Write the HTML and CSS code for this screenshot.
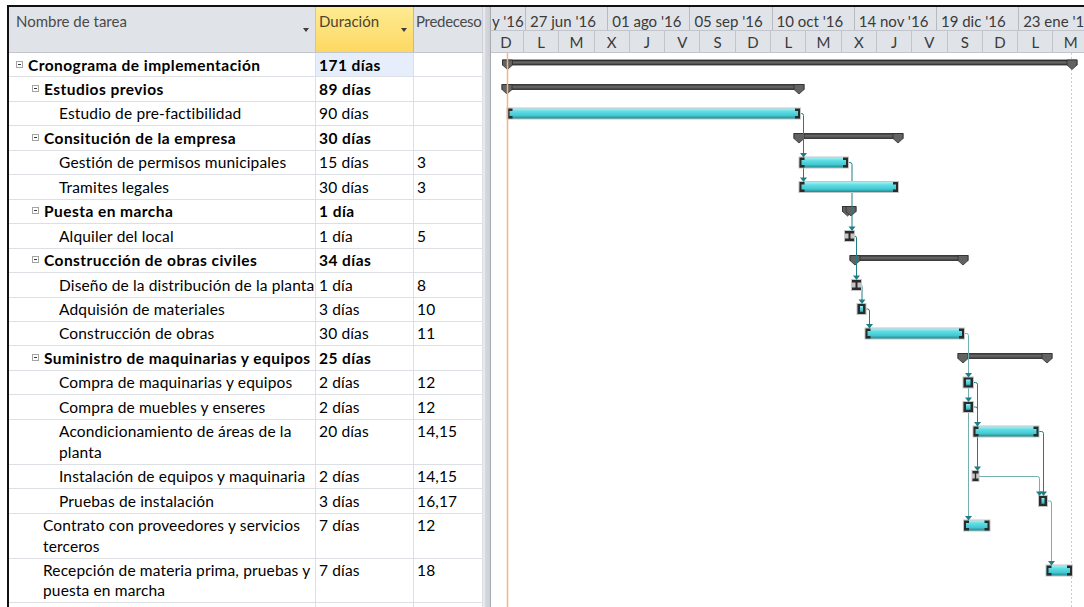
FILE: index.html
```html
<!DOCTYPE html>
<html lang="es">
<head>
<meta charset="utf-8">
<title>Cronograma de implementación</title>
<link rel="stylesheet" href="styles.css">
</head>
<body>
<div class="project">
  <section class="sheet">
    <header class="sheet-head">
      <div class="hcell c-name"><span class="hlabel">Nombre de tarea</span><span class="drop"></span></div>
      <div class="hcell c-dur sorted"><span class="hlabel">Duración</span><span class="drop"></span></div>
      <div class="hcell c-pred"><span class="hlabel">Predeceso</span></div>
    </header>
    <div class="sheet-body">
      <div class="row summary">
        <div class="cell c-name lvl0"><span class="toggle"></span>Cronograma de implementación</div>
        <div class="cell c-dur active">171 días</div>
        <div class="cell c-pred"></div>
      </div>
      <div class="row summary">
        <div class="cell c-name lvl1"><span class="toggle"></span>Estudios previos</div>
        <div class="cell c-dur">89 días</div>
        <div class="cell c-pred"></div>
      </div>
      <div class="row">
        <div class="cell c-name lvl2">Estudio de pre-factibilidad</div>
        <div class="cell c-dur">90 días</div>
        <div class="cell c-pred"></div>
      </div>
      <div class="row summary">
        <div class="cell c-name lvl1"><span class="toggle"></span>Consitución de la empresa</div>
        <div class="cell c-dur">30 días</div>
        <div class="cell c-pred"></div>
      </div>
      <div class="row">
        <div class="cell c-name lvl2">Gestión de permisos municipales</div>
        <div class="cell c-dur">15 días</div>
        <div class="cell c-pred">3</div>
      </div>
      <div class="row">
        <div class="cell c-name lvl2">Tramites legales</div>
        <div class="cell c-dur">30 días</div>
        <div class="cell c-pred">3</div>
      </div>
      <div class="row summary">
        <div class="cell c-name lvl1"><span class="toggle"></span>Puesta en marcha</div>
        <div class="cell c-dur">1 día</div>
        <div class="cell c-pred"></div>
      </div>
      <div class="row">
        <div class="cell c-name lvl2">Alquiler del local</div>
        <div class="cell c-dur">1 día</div>
        <div class="cell c-pred">5</div>
      </div>
      <div class="row summary">
        <div class="cell c-name lvl1"><span class="toggle"></span>Construcción de obras civiles</div>
        <div class="cell c-dur">34 días</div>
        <div class="cell c-pred"></div>
      </div>
      <div class="row">
        <div class="cell c-name lvl2">Diseño de la distribución de la planta</div>
        <div class="cell c-dur">1 día</div>
        <div class="cell c-pred">8</div>
      </div>
      <div class="row">
        <div class="cell c-name lvl2">Adquisión de materiales</div>
        <div class="cell c-dur">3 días</div>
        <div class="cell c-pred">10</div>
      </div>
      <div class="row">
        <div class="cell c-name lvl2">Construcción de obras</div>
        <div class="cell c-dur">30 días</div>
        <div class="cell c-pred">11</div>
      </div>
      <div class="row summary">
        <div class="cell c-name lvl1"><span class="toggle"></span>Suministro de maquinarias y equipos</div>
        <div class="cell c-dur">25 días</div>
        <div class="cell c-pred"></div>
      </div>
      <div class="row">
        <div class="cell c-name lvl2">Compra de maquinarias y equipos</div>
        <div class="cell c-dur">2 días</div>
        <div class="cell c-pred">12</div>
      </div>
      <div class="row">
        <div class="cell c-name lvl2">Compra de muebles y enseres</div>
        <div class="cell c-dur">2 días</div>
        <div class="cell c-pred">12</div>
      </div>
      <div class="row">
        <div class="cell c-name lvl2">Acondicionamiento de áreas de la<br>planta</div>
        <div class="cell c-dur">20 días</div>
        <div class="cell c-pred">14,15</div>
      </div>
      <div class="row">
        <div class="cell c-name lvl2">Instalación de equipos y maquinaria</div>
        <div class="cell c-dur">2 días</div>
        <div class="cell c-pred">14,15</div>
      </div>
      <div class="row">
        <div class="cell c-name lvl2">Pruebas de instalación</div>
        <div class="cell c-dur">3 días</div>
        <div class="cell c-pred">16,17</div>
      </div>
      <div class="row">
        <div class="cell c-name lvl1t">Contrato con proveedores y servicios<br>terceros</div>
        <div class="cell c-dur">7 días</div>
        <div class="cell c-pred">12</div>
      </div>
      <div class="row">
        <div class="cell c-name lvl1t">Recepción de materia prima, pruebas y<br>puesta en marcha</div>
        <div class="cell c-dur">7 días</div>
        <div class="cell c-pred">18</div>
      </div>
      <div class="row blank">
        <div class="cell c-name"></div>
        <div class="cell c-dur"></div>
        <div class="cell c-pred"></div>
      </div>
    </div>
  </section>

  <div class="splitter"></div>

  <section class="chart">
    <div class="scale">
      <div class="tier major">
        <div class="tick lead">y '16</div>
        <div class="tick">27 jun '16</div>
        <div class="tick">01 ago '16</div>
        <div class="tick">05 sep '16</div>
        <div class="tick">10 oct '16</div>
        <div class="tick">14 nov '16</div>
        <div class="tick">19 dic '16</div>
        <div class="tick">23 ene '16</div>
      </div>
      <div class="tier minor">
        <div class="unit">D</div><div class="unit">L</div><div class="unit">M</div><div class="unit">X</div>
        <div class="unit">J</div><div class="unit">V</div><div class="unit">S</div><div class="unit">D</div>
        <div class="unit">L</div><div class="unit">M</div><div class="unit">X</div><div class="unit">J</div>
        <div class="unit">V</div><div class="unit">S</div><div class="unit">D</div><div class="unit">L</div>
        <div class="unit">M</div>
      </div>
    </div>

    <svg class="bars" width="593" height="554" viewBox="0 0 593 554">
      <defs>
        <linearGradient id="taskFill" x1="0" y1="0" x2="0" y2="1">
          <stop offset="0" stop-color="#a8f1f5"/>
          <stop offset="0.3" stop-color="#5edde5"/>
          <stop offset="0.7" stop-color="#44c8d0"/>
          <stop offset="1" stop-color="#1e8a91"/>
        </linearGradient>
        <linearGradient id="sumFill" x1="0" y1="0" x2="0" y2="1">
          <stop offset="0" stop-color="#2c2c2c"/>
          <stop offset="0.45" stop-color="#6c6c6c"/>
          <stop offset="1" stop-color="#383838"/>
        </linearGradient>
        <path id="cap" d="M0 0h10v5l-5 4.5-5-4.5z"/>
        <path id="capL" d="M0 0h5v2.5h-3v5h3v2.5h-5z"/>
        <path id="capR" d="M0 0h-5v2.5h3v5h-3v2.5h5z"/>
        <path id="beam" d="M0 0h9v2.5h-3.5v5h3.5v2.5h-9v-2.5h3.5v-5h-3.5z"/>
        <path id="arr" d="M-3.5-4.5h7l-3.5 4.5z"/>
      </defs>

      <!-- project finish -->
      <line class="finish" x1="580.5" y1="0" x2="580.5" y2="554"/>

      <!-- summary tasks -->
      <g transform="translate(11.5 7)">
        <rect class="sum-bar" width="574.5" height="5" fill="url(#sumFill)"/>
        <use href="#cap" class="sum-cap"/><use href="#cap" x="564.5" class="sum-cap"/>
      </g>
      <g transform="translate(11 31.5)">
        <rect class="sum-bar" width="302" height="5" fill="url(#sumFill)"/>
        <use href="#cap" class="sum-cap"/><use href="#cap" x="292" class="sum-cap"/>
      </g>
      <g transform="translate(303 80.5)">
        <rect class="sum-bar" width="109" height="5" fill="url(#sumFill)"/>
        <use href="#cap" class="sum-cap"/><use href="#cap" x="99" class="sum-cap"/>
      </g>
      <g transform="translate(351.5 153.5)">
        <rect class="sum-bar" width="13.5" height="5" fill="url(#sumFill)"/>
        <use href="#cap" class="sum-cap"/><use href="#cap" x="3.5" class="sum-cap"/>
      </g>
      <g transform="translate(359 202.5)">
        <rect class="sum-bar" width="118" height="5" fill="url(#sumFill)"/>
        <use href="#cap" class="sum-cap"/><use href="#cap" x="108" class="sum-cap"/>
      </g>
      <g transform="translate(467 300.5)">
        <rect class="sum-bar" width="94" height="5" fill="url(#sumFill)"/>
        <use href="#cap" class="sum-cap"/><use href="#cap" x="84" class="sum-cap"/>
      </g>

      <!-- dependency links -->
      <path class="link" d="M309 60.5H310.5Q312.5 60.5 312.5 62.5V125"/>
      <path class="link" d="M357 109.5H359Q361 109.5 361 111.5V174"/>
      <path class="link" d="M363 183H363.5Q365.5 183 365.5 185V223"/>
      <path class="link" d="M370 232Q371 232 371 233.5V247"/>
      <path class="link" d="M374.5 256H376.5Q378.5 256 378.5 258V271.5"/>
      <path class="link soft" d="M473 280.5H475.5Q477.5 280.5 477.5 282.5V463.5"/>
      <path class="link" d="M482 329.5H484.5Q486.5 329.5 486.5 331.5V414"/>
      <path class="link" d="M482 354H484.5Q486.5 354 486.5 356"/>
      <path class="link" d="M547.5 378.5H550.5Q552.5 378.5 552.5 380.5V439"/>
      <path class="link soft" d="M487.5 423.5H546.5Q548.5 423.5 548.5 425.5V439"/>
      <path class="link soft" d="M556 448H558.5Q560.5 448 560.5 450V508.5"/>

      <!-- tasks -->
      <g transform="translate(16.5 55.5)">
        <rect class="halo" x="-1" y="-1" width="294.5" height="12"/>
        <rect width="292.5" height="10" fill="url(#taskFill)"/>
        <use href="#capL" class="cap"/><use href="#capR" x="292.5" class="cap"/>
      </g>
      <g transform="translate(308.5 104.5)">
        <rect class="halo" x="-1" y="-1" width="50.5" height="12"/>
        <rect width="48.5" height="10" fill="url(#taskFill)"/>
        <use href="#capL" class="cap"/><use href="#capR" x="48.5" class="cap"/>
      </g>
      <g transform="translate(308.5 129)">
        <rect class="halo" x="-1" y="-1" width="100.5" height="12"/>
        <rect width="98.5" height="10" fill="url(#taskFill)"/>
        <use href="#capL" class="cap"/><use href="#capR" x="98.5" class="cap"/>
      </g>
      <g transform="translate(354 178)">
        <rect class="halo" x="-1" y="-1" width="11" height="12"/>
        <use href="#beam" class="cap"/>
      </g>
      <g transform="translate(361 227)">
        <rect class="halo" x="-1" y="-1" width="11" height="12"/>
        <use href="#beam" class="cap"/>
      </g>
      <g transform="translate(366.5 251)">
        <rect class="halo" x="-1" y="-1" width="10" height="12"/>
        <rect class="box" width="8" height="10"/>
        <rect x="2.5" y="2" width="3" height="6" fill="url(#taskFill)"/>
      </g>
      <g transform="translate(374.5 275.5)">
        <rect class="halo" x="-1" y="-1" width="100.5" height="12"/>
        <rect width="98.5" height="10" fill="url(#taskFill)"/>
        <use href="#capL" class="cap"/><use href="#capR" x="98.5" class="cap"/>
      </g>
      <g transform="translate(472.5 324.5)">
        <rect class="halo" x="-1" y="-1" width="11.5" height="12"/>
        <rect class="box" width="9.5" height="10"/>
        <rect x="2.5" y="2" width="4.5" height="6" fill="url(#taskFill)"/>
      </g>
      <g transform="translate(472.5 349)">
        <rect class="halo" x="-1" y="-1" width="11.5" height="12"/>
        <rect class="box" width="9.5" height="10"/>
        <rect x="2.5" y="2" width="4.5" height="6" fill="url(#taskFill)"/>
      </g>
      <g transform="translate(482.5 373.5)">
        <rect class="halo" x="-1" y="-1" width="67" height="12"/>
        <rect width="65" height="10" fill="url(#taskFill)"/>
        <use href="#capL" class="cap"/><use href="#capR" x="65" class="cap"/>
      </g>
      <g transform="translate(481.5 418)">
        <rect class="halo" x="-1" y="-1" width="8" height="12"/>
        <use href="#beam" class="cap" transform="scale(0.667 1)"/>
      </g>
      <g transform="translate(548 443)">
        <rect class="halo" x="-1" y="-1" width="10" height="12"/>
        <rect class="box" width="8" height="10"/>
        <rect x="2.5" y="2" width="3" height="6" fill="url(#taskFill)"/>
      </g>
      <g transform="translate(473 467.5)">
        <rect class="halo" x="-1" y="-1" width="27.5" height="12"/>
        <rect width="25.5" height="10" fill="url(#taskFill)"/>
        <use href="#capL" class="cap"/><use href="#capR" x="25.5" class="cap"/>
      </g>
      <g transform="translate(555.5 512.5)">
        <rect class="halo" x="-1" y="-1" width="27.5" height="12"/>
        <rect width="25.5" height="10" fill="url(#taskFill)"/>
        <use href="#capL" class="cap"/><use href="#capR" x="25.5" class="cap"/>
      </g>

      <!-- arrowheads -->
      <use href="#arr" class="arrow" x="312.5" y="104.5"/>
      <use href="#arr" class="arrow" x="312.5" y="129"/>
      <use href="#arr" class="arrow" x="361" y="178"/>
      <use href="#arr" class="arrow" x="365.5" y="227"/>
      <use href="#arr" class="arrow" x="371" y="251"/>
      <use href="#arr" class="arrow" x="378.5" y="275.5"/>
      <use href="#arr" class="arrow" x="477.5" y="324.5"/>
      <use href="#arr" class="arrow" x="477.5" y="349"/>
      <use href="#arr" class="arrow" x="477.5" y="467.5"/>
      <use href="#arr" class="arrow" x="486.5" y="373.5"/>
      <use href="#arr" class="arrow" x="486.5" y="418"/>
      <use href="#arr" class="arrow" x="548.5" y="443"/>
      <use href="#arr" class="arrow" x="552.5" y="443"/>
      <use href="#arr" class="arrow" x="560.5" y="512.5"/>

      <!-- status date -->
      <line class="today" x1="16.5" y1="0" x2="16.5" y2="554"/>
    </svg>
  </section>
</div>
</body>
</html>
```

FILE: styles.css
```css
* {
  box-sizing: border-box;
}

html,
body {
  margin: 0;
  background: #ffffff;
}

body {
  font-family: Lato, "Liberation Sans", sans-serif;
  font-size: 15px;
  color: #000000;
  overflow: hidden;
}

/* window frame */
.project {
  display: flex;
  height: 602px;
  margin: 5px 0 0 7px;
  border-top: 2px solid #111111;
  border-left: 2px solid #111111;
  overflow: hidden;
}

/* ---------- task sheet ---------- */
.sheet {
  flex: 0 0 474px;
  display: flex;
  flex-direction: column;
  overflow: hidden;
}

.c-name {
  flex: 0 0 307px;
}

.c-dur {
  flex: 0 0 98px;
}

.c-pred {
  flex: 0 0 69px;
}

.sheet-head {
  display: flex;
  flex: 0 0 46px;
  background: #e0e3e8;
  border-bottom: 1px solid #c2c6cc;
}

.hcell {
  display: flex;
  padding: 4px 0 0 3px;
  line-height: 20px;
  color: #4a4a4a;
  white-space: nowrap;
  overflow: hidden;
  border-right: 1px solid #cdd1d6;
}

.hcell.c-name {
  padding-left: 7px;
}

.hcell.c-pred {
  padding-left: 2px;
  letter-spacing: -0.3px;
}

.hcell.sorted {
  background: linear-gradient(#feeb93, #fdd862);
  border-left: 1px solid #efc25a;
  border-right: 1px solid #e9b548;
  margin-left: -1px;
  flex-basis: 99px;
  color: #4d4530;
}

.drop {
  flex: 0 0 auto;
  align-self: flex-end;
  width: 0;
  height: 0;
  margin: 0 6px 20px auto;
  border-left: 3.5px solid transparent;
  border-right: 3.5px solid transparent;
  border-top: 4px solid #3d3d3d;
}

.row {
  display: flex;
  flex: 0 0 auto;
  border-bottom: 1px solid #dcdfe3;
}

.cell {
  padding: 1.5px 3px;
  font-size: 15.5px;
  letter-spacing: 0.15px;
  line-height: 20.45px;
  white-space: nowrap;
  overflow: hidden;
  border-right: 1px solid #dcdfe3;
}

.cell.active {
  background: #e5eefa;
}

.summary .cell {
  font-weight: 700;
  letter-spacing: 0.45px;
}

.lvl0 {
  padding-left: 7px;
}

.lvl1 {
  padding-left: 23px;
}

.lvl1t {
  padding-left: 34px;
}

.lvl2 {
  padding-left: 50px;
}

.toggle {
  display: inline-block;
  width: 7px;
  height: 7px;
  margin-right: 5px;
  vertical-align: 3px;
  border: 1px solid #a4a4a4;
  background: linear-gradient(#3a3a3a, #3a3a3a) center / 3px 1px no-repeat, #ffffff;
}

.blank {
  height: 24.45px;
}

/* pane divider */
.splitter {
  flex: 0 0 8px;
  background: linear-gradient(to right, #e7e9ec 0, #e7e9ec 2px, #d6d9dd 2px, #cbcfd4 7px, #a7acb3 7px);
}

/* ---------- gantt chart ---------- */
.chart {
  flex: 1 1 auto;
  display: flex;
  flex-direction: column;
  overflow: hidden;
}

.scale {
  flex: 0 0 46px;
  background: #e0e3e8;
  border-bottom: 1px solid #c2c6cc;
  color: #3a3a3a;
  overflow: hidden;
}

.tier {
  display: flex;
  white-space: nowrap;
}

.major {
  height: 24px;
  border-bottom: 1px solid #c2c6cc;
}

.tick {
  flex: 0 0 82.2px;
  padding: 5px 0 0 4px;
  line-height: 18px;
  overflow: hidden;
  border-right: 1px solid #b7bbc1;
}

.tick.lead {
  flex-basis: 35px;
  padding-left: 1px;
}

.minor {
  height: 21px;
  margin-left: -2.3px;
}

.unit {
  flex: 0 0 35.3px;
  text-align: center;
  padding-top: 1px;
  line-height: 20px;
  border-right: 1px solid #c2c6cc;
}

.bars {
  display: block;
  flex: 0 0 auto;
}

.finish {
  stroke: #cdcdcd;
  stroke-width: 1;
  stroke-dasharray: 2 2;
}

.today {
  stroke: #f5b482;
  stroke-width: 1.5;
}

.sum-bar {
  stroke: #262626;
  stroke-width: 0.8;
}

.sum-cap {
  fill: #626262;
  stroke: #2e2e2e;
  stroke-width: 0.8;
}

.halo {
  fill: #c6c6c6;
}

.cap,
.box {
  fill: #2b2b2b;
}

.link {
  fill: none;
  stroke: #1f7e84;
  stroke-width: 1;
}

.link.soft {
  stroke: #73afb3;
}

.arrow {
  fill: #1f7e84;
}
```
